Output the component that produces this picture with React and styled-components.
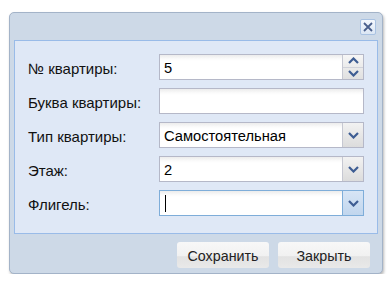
import React from "react";
import styled, { createGlobalStyle, css } from "styled-components";

const Global = createGlobalStyle`
  html, body { margin: 0; padding: 0; background: #ffffff; }
  body { font-family: "Liberation Sans", Arial, sans-serif; }
  * { box-sizing: border-box; }
`;

const Page = styled.div`
  padding: 12px 0 0 9px;
`;

const Window = styled.div`
  width: 374px;
  height: 262px;
  background: #cdd9e7;
  border: 1px solid #a3b3c8;
  border-radius: 5px;
  box-shadow: 1px 2px 3px rgba(0, 0, 0, 0.28);
  display: flex;
  flex-direction: column;
  padding: 0 4px 0 4px;
`;

const TitleBar = styled.div`
  height: 27px;
  display: flex;
  align-items: flex-start;
  justify-content: flex-end;
  padding: 6px 2px 0 0;
`;

const CloseButton = styled.button`
  width: 16px;
  height: 16px;
  padding: 0;
  border: 1px solid #a9c2e2;
  border-radius: 2px;
  background: linear-gradient(#f4f8fd, #dbe6f4);
  display: flex;
  align-items: center;
  justify-content: center;
`;

const Panel = styled.div`
  height: 194px;
  background: #dfe8f6;
  border: 1px solid #99bbe8;
  padding: 13px 13px 0 13px;
  display: flex;
  flex-direction: column;
  gap: 8px;
`;

const Row = styled.div`
  display: flex;
  align-items: center;
  height: 26px;
`;

const Label = styled.div`
  width: 131px;
  font-size: 15px;
  color: #111;
  padding-top: 2px;
  white-space: nowrap;
`;

const Field = styled.div`
  width: 205px;
  height: 26px;
  display: flex;
  border: 1px solid ${(p) => (p.$focus ? "#7eadd9" : "#b5b8c8")};
  background: #fff;
`;

const Input = styled.div`
  flex: 1;
  background: linear-gradient(#ececec 0, #fbfbfb 4px, #fff 6px);
  font-size: 14.7px;
  color: #000;
  display: flex;
  align-items: center;
  padding: 1px 0 0 4px;
`;

const Caret = styled.span`
  display: inline-block;
  width: 1px;
  height: 17px;
  background: #000;
  margin-left: 1px;
`;

const Trigger = styled.div`
  width: 21px;
  border-left: 1px solid ${(p) => (p.$focus ? "#7eadd9" : "#c6c8d2")};
  display: flex;
  align-items: center;
  justify-content: center;
  ${(p) =>
    p.$focus
      ? css`
          background: linear-gradient(#d7e5f5, #c1d6ee);
        `
      : css`
          background: linear-gradient(#f2f2f2, #dcdcdc);
        `}
`;

const Spinner = styled.div`
  width: 21px;
  border-left: 1px solid #c6c8d2;
  display: flex;
  flex-direction: column;
  background: linear-gradient(#f6f6f6, #e0e0e0);
`;

const SpinHalf = styled.div`
  flex: 1;
  display: flex;
  align-items: center;
  justify-content: center;
  & + & {
    border-top: 1px solid #d0d2da;
  }
`;

const Footer = styled.div`
  flex: 1;
  display: flex;
  justify-content: flex-end;
  align-items: flex-start;
  gap: 9px;
  padding: 8px 8px 0 0;
`;

const Button = styled.button`
  width: 92px;
  height: 26px;
  border: none;
  border-radius: 3px;
  background: linear-gradient(#f8f8f8 0%, #f1f1f1 55%, #e2e2e2 56%, #e9e9e9 100%);
  font-family: "Liberation Sans", Arial, sans-serif;
  font-size: 14.3px;
  color: #222;
  padding: 2px 0 0 0;
`;

const Chevron = ({ up }) => (
  <svg width="11" height="7" viewBox="0 0 11 7">
    <path
      d={up ? "M1 6 L5.5 1.5 L10 6" : "M1 1 L5.5 5.5 L10 1"}
      fill="none"
      stroke="#3e5d93"
      strokeWidth="2.2"
    />
  </svg>
);

const Rows = [
  { label: "№ квартиры:", value: "5", kind: "spin" },
  { label: "Буква квартиры:", value: "", kind: "text" },
  { label: "Тип квартиры:", value: "Самостоятельная", kind: "combo" },
  { label: "Этаж:", value: "2", kind: "combo" },
  { label: "Флигель:", value: "", kind: "combo", focus: true },
];

export default function App() {
  return (
    <>
      <Global />
      <Page>
        <Window>
          <TitleBar>
            <CloseButton aria-label="close">
              <svg width="12" height="12" viewBox="0 0 12 12">
                <path d="M2 2 L10 10 M10 2 L2 10" stroke="#4a5f8c" strokeWidth="1.8" />
              </svg>
            </CloseButton>
          </TitleBar>
          <Panel>
            {Rows.map((r) => (
              <Row key={r.label}>
                <Label>{r.label}</Label>
                <Field $focus={r.focus}>
                  <Input>
                    {r.value}
                    {r.focus && <Caret />}
                  </Input>
                  {r.kind === "spin" && (
                    <Spinner>
                      <SpinHalf>
                        <Chevron up />
                      </SpinHalf>
                      <SpinHalf>
                        <Chevron />
                      </SpinHalf>
                    </Spinner>
                  )}
                  {r.kind === "combo" && (
                    <Trigger $focus={r.focus}>
                      <Chevron />
                    </Trigger>
                  )}
                </Field>
              </Row>
            ))}
          </Panel>
          <Footer>
            <Button>Сохранить</Button>
            <Button>Закрыть</Button>
          </Footer>
        </Window>
      </Page>
    </>
  );
}
